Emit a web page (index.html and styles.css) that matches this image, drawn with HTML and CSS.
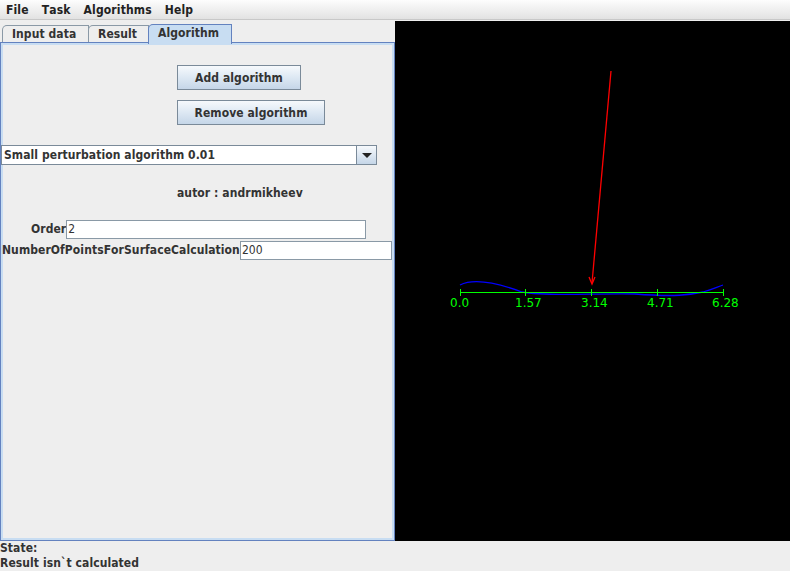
FILE: index.html
```html
<!DOCTYPE html>
<html>
<head>
<meta charset="utf-8">
<link rel="stylesheet" href="styles.css">
</head>
<body>
<div class="menubar">
  <span class="menu">File</span>
  <span class="menu">Task</span>
  <span class="menu">Algorithms</span>
  <span class="menu">Help</span>
</div>
<div class="main">
  <div class="left">
    <div class="tabs">
      <div class="tab t1">Input data</div>
      <div class="tab t2">Result</div>
      <div class="tab t3 sel">Algorithm</div>
    </div>
    <div class="content">
      <div class="btn add">Add algorithm</div>
      <div class="btn remove">Remove algorithm</div>
      <div class="combo">
        <div class="combo-text">Small perturbation algorithm 0.01</div>
        <div class="combo-btn"><span class="tri"></span></div>
      </div>
      <div class="autor">autor : andrmikheev</div>
      <div class="row r1">
        <span class="lbl">Order</span><span class="field f1">2</span>
      </div>
      <div class="row r2">
        <span class="lbl">NumberOfPointsForSurfaceCalculation</span><span class="field f2">200</span>
      </div>
    </div>
  </div>
  <div class="canvas">
    <svg class="plot" width="395" height="520" viewBox="0 0 395 520">
      <path d="M65,264 C75,259 92,258 127,271 C150,276 200,272 240,273 C280,276 295,274 308,271 C318,268 322,266 328,264" fill="none" stroke="#0000ff" stroke-width="1.3"/>
      <g stroke="#00ff00" stroke-width="1" shape-rendering="crispEdges">
        <line x1="65" y1="271.5" x2="328" y2="271.5"/>
        <line x1="65.5" y1="268" x2="65.5" y2="275"/>
        <line x1="130.5" y1="268" x2="130.5" y2="275"/>
        <line x1="196.5" y1="268" x2="196.5" y2="275"/>
        <line x1="262.5" y1="268" x2="262.5" y2="275"/>
        <line x1="328.5" y1="268" x2="328.5" y2="275"/>
      </g>
      <g class="ticks" fill="#00ff00">
        <text x="55" y="286">0.0</text>
        <text x="120" y="286">1.57</text>
        <text x="186" y="286">3.14</text>
        <text x="252" y="286">4.71</text>
        <text x="317" y="286">6.28</text>
      </g>
      <g stroke="#ff0000" stroke-width="1.3" fill="none">
        <line x1="216" y1="50" x2="197" y2="262"/>
        <polyline points="194,256 197,263 200,256"/>
      </g>
    </svg>
  </div>
</div>
<div class="status">
  <div>State:</div>
  <div>Result isn`t calculated</div>
</div>
</body>
</html>
```

FILE: styles.css
```css
html, body {
  margin: 0;
  padding: 0;
}
body {
  width: 790px;
  height: 571px;
  overflow: hidden;
  background: #eeeeee;
  font-family: "DejaVu Sans Condensed", "DejaVu Sans", "Liberation Sans", sans-serif;
  font-stretch: condensed;
  font-size: 12px;
  font-weight: bold;
  font-kerning: none;
  letter-spacing: 0.08px;
  color: #333333;
  white-space: nowrap;
}
.menubar {
  height: 19px;
  display: flex;
  align-items: center;
  background: linear-gradient(#fdfdfd, #e2e2e2);
  border-bottom: 1px solid #c8c8c8;
  margin-bottom: 1px;
}
.menu {
  padding: 0 7px 0 6px;
  letter-spacing: 0.15px;
  color: #222;
}
.main {
  display: flex;
  height: 520px;
}
.left {
  width: 395px;
  display: flex;
  flex-direction: column;
}
.tabs {
  height: 21px;
  display: flex;
  align-items: flex-end;
  padding-left: 2px;
}
.tab {
  height: 17px;
  line-height: 17px;
  box-sizing: border-box;
  border: 1px solid #8a99a6;
  border-bottom: none;
  border-top-left-radius: 5px;
  background: #eeeeee;
  padding: 0 0 0 9px;
  margin-right: -1px;
  color: #333;
}
.tab.t1 { width: 87px; }
.tab.t2 { width: 61px; }
.tab.sel {
  width: 84px;
  line-height: 17px;
  background: #c8ddf2;
  border-color: #6382bf;
  position: relative;
  z-index: 1;
  margin-bottom: -2px;
  height: 20px;
  padding-bottom: 2px;
}
.content {
  flex: 1;
  box-sizing: border-box;
  border: 1px solid #6382bf;
  box-shadow: inset 0 0 0 2px #c8ddf2;
  padding: 22px 0 0 0;
  display: flex;
  flex-direction: column;
  align-items: flex-start;
}
.btn {
  box-sizing: border-box;
  height: 25px;
  line-height: 24px;
  border: 1px solid #7a8a99;
  background: linear-gradient(#f6f9fc, #dde8f3 50%, #c5d6e8);
  text-align: center;
  margin-left: 176px;
  color: #333;
}
.add { width: 124px; }
.remove { width: 148px; margin-top: 10px; }
.combo {
  margin-top: 20px;
  width: 376px;
  height: 20px;
  box-sizing: border-box;
  border: 1px solid #7a8a99;
  background: #fff;
  display: flex;
}
.combo-text {
  flex: 1;
  line-height: 18px;
  padding-left: 2px;
}
.combo-btn {
  width: 19px;
  border-left: 1px solid #7a8a99;
  background: linear-gradient(#f6f9fc, #c5d6e8);
  display: flex;
  align-items: center;
  justify-content: center;
}
.tri {
  width: 0;
  height: 0;
  border-left: 5px solid transparent;
  border-right: 5px solid transparent;
  border-top: 5px solid #222;
  margin-top: 1px;
}
.autor {
  margin-top: 21px;
  margin-left: 176px;
  height: 15px;
  line-height: 15px;
}
.row {
  display: flex;
  align-items: center;
}
.r1 {
  margin-top: 19px;
  padding-left: 30px;
}
.r2 {
  margin-top: 2px;
  padding-left: 1px;
}
.lbl {
  line-height: 15px;
}
.field {
  box-sizing: border-box;
  height: 19px;
  line-height: 17px;
  border: 1px solid #8a99a6;
  background: #fff;
  font-weight: normal;
  padding-left: 1px;
  color: #333;
}
.f1 { width: 300px; }
.f2 { width: 152px; }
.canvas {
  flex: 1;
  background: #000;
  overflow: hidden;
}
.plot {
  display: block;
}
.ticks text {
  font-family: "DejaVu Sans", sans-serif;
  font-stretch: normal;
  font-size: 12px;
  font-weight: normal;
  letter-spacing: 0;
}
.status {
  height: 30px;
  line-height: 15px;
}
```
